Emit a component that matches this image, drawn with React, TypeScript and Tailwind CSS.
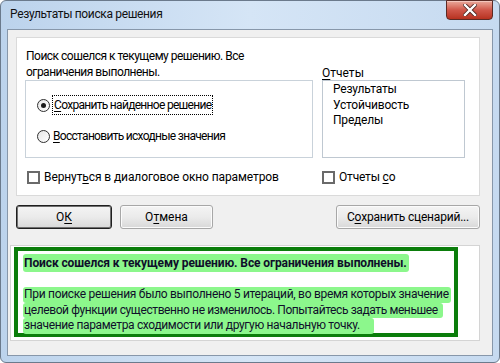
import React from "react";

// Win7 "Solver results" dialog, Russian locale

function Mnemonic({ text, at }: { text: string; at: number }) {
  return (
    <>
      {text.slice(0, at)}
      <span className="underline decoration-1 underline-offset-[2px]">{text[at]}</span>
      {text.slice(at + 1)}
    </>
  );
}

function Radio({ checked }: { checked?: boolean }) {
  return (
    <span className="flex h-[13px] w-[13px] shrink-0 items-center justify-center rounded-full border border-[#2f2f2f] bg-gradient-to-br from-[#e6e6e6] to-white">
      {checked && <span className="h-[5px] w-[5px] rounded-full bg-[#1a1a1a]" />}
    </span>
  );
}

function Checkbox() {
  return <span className="h-[13px] w-[13px] shrink-0 border-2 border-[#6a6a6a] bg-white" />;
}

function Button({
  children,
  width,
  primary,
}: {
  children: React.ReactNode;
  width: string;
  primary?: boolean;
}) {
  return (
    <div
      className={`flex h-[24px] items-center justify-center rounded-[3px] bg-gradient-to-b from-[#f4f4f4] via-[#ebebeb] to-[#d8d8d8] ${width} ${
        primary
          ? "border border-[#1f1f1f] shadow-[inset_0_0_0_1px_#6f6f6f]"
          : "border border-[#a7a7a7] shadow-[inset_0_0_0_1px_#fbfbfb]"
      }`}
    >
      {children}
    </div>
  );
}

function CloseButton() {
  return (
    <div className="-mt-[1px] flex h-[20px] w-[47px] items-center justify-center rounded-b-[4px] border border-[#5b2a24] bg-gradient-to-b from-[#e9a99c] via-[#d0574a] to-[#b7311f] shadow-[inset_0_1px_0_#f3c6bd]">
      <svg width="14" height="12" viewBox="0 0 14 12">
        <path d="M2 1 L12 11 M12 1 L2 11" stroke="#4a2420" strokeWidth="4" strokeLinecap="square" />
        <path d="M2 1 L12 11 M12 1 L2 11" stroke="#ffffff" strokeWidth="2.4" strokeLinecap="square" />
      </svg>
    </div>
  );
}

export default function App() {
  return (
    <div className="h-[363px] w-[500px] bg-white font-['Roboto',sans-serif] text-[12px] leading-[16px] text-black">
      <div className="flex h-full w-full flex-col rounded-[6px] border border-[#6b7a8c] bg-gradient-to-r from-[#bcd3ec] via-[#d5e5f6] to-[#c6daf0] px-[6px] pb-[6px]">
        {/* title bar */}
        <div className="flex h-[28px] items-start justify-between">
          <div className="pl-[3px] pt-[5px] text-[12px] tracking-[-0.35px] text-[#111]">
            Результаты поиска решения
          </div>
          <CloseButton />
        </div>

        {/* client area */}
        <div className="flex flex-1 flex-col border border-[#8797aa] bg-[#f0f0f0]">
          <div className="ml-[8px] mt-[7px] flex h-[159px] w-[464px] flex-col border border-[#dadada] bg-white pl-[8px] pt-[10px]">
            <div className="grid grid-cols-[288px_143px] gap-x-[9px]">
              <div className="pl-[1px] tracking-[-0.5px]">
                Поиск сошелся к текущему решению. Все
                <br />
                ограничения выполнены.
              </div>
              <div className="self-end leading-[14px]">
                <Mnemonic text="Отчеты" at={0} />
              </div>

              <div className="flex h-[78px] flex-col border border-[#c9d2da] pl-[11px] pt-[14px] tracking-[-0.7px]">
                <div className="flex items-center gap-[2px]">
                  <Radio checked />
                  <span className="border border-dotted border-black px-[1px] py-[1px]">
                    <Mnemonic text="Сохранить найденное решение" at={0} />
                  </span>
                </div>
                <div className="mt-[13px] flex items-center gap-[3px]">
                  <Radio />
                  <span>
                    <Mnemonic text="Восстановить исходные значения" at={0} />
                  </span>
                </div>
              </div>

              <div className="h-[78px] border border-[#bfc8d1] pl-[10px] pt-[1px] leading-[15.5px] tracking-[-0.2px]">
                <div>Результаты</div>
                <div>Устойчивость</div>
                <div>Пределы</div>
              </div>
            </div>

            <div className="mt-[11px] grid grid-cols-[297px_143px]">
              <div className="flex items-center gap-[4px] pl-[2px] tracking-[-0.1px]">
                <Checkbox />
                <span>
                  <Mnemonic text="Вернуться в диалоговое окно параметров" at={6} />
                </span>
              </div>
              <div className="flex items-center gap-[4px] tracking-[-0.2px]">
                <Checkbox />
                <span>
                  <Mnemonic text="Отчеты со" at={7} />
                </span>
              </div>
            </div>
          </div>

          {/* buttons */}
          <div className="ml-[8px] mt-[9px] flex w-[464px] items-center">
            <Button width="w-[96px]" primary>
              <Mnemonic text="ОК" at={1} />
            </Button>
            <div className="ml-[8px]">
              <Button width="w-[93px]">
                <Mnemonic text="Отмена" at={1} />
              </Button>
            </div>
            <div className="ml-auto tracking-[-0.2px]">
              <Button width="w-[144px]">
                <Mnemonic text="Сохранить сценарий..." at={1} />
              </Button>
            </div>
          </div>

          {/* message */}
          <div className="ml-[2px] mt-[16px] h-[96px] w-[470px] border border-[#d4d4d4] bg-white pl-[3px] pt-[1px]">
            <div className="h-[90px] w-[444px] border-[4px] border-[#0b7d0b] pl-[5px] pt-[4px] text-[#0f0f2a]">
              <div className="whitespace-nowrap font-bold tracking-[-0.1px]">
                <span className="rounded-[3px] bg-[#8cf78c] py-[2px] pl-[1px] pr-[2px]">
                  Поиск сошелся к текущему решению. Все ограничения выполнены.
                </span>
              </div>
              <div className="mt-[16px] flex flex-col items-start whitespace-nowrap leading-[15.5px]">
                <span className="rounded-[3px] bg-[#8cf78c] pl-[1px] pr-[2px] tracking-[-0.3px]">
                  При поиске решения было выполнено 5 итераций, во время которых значение
                </span>
                <span className="rounded-[3px] bg-[#8cf78c] pl-[1px] pr-[5px] tracking-[-0.4px]">
                  целевой функции существенно не изменилось. Попытайтесь задать меньшее
                </span>
                <span className="rounded-[3px] bg-[#8cf78c] pl-[1px] pr-[14px] tracking-[-0.35px]">
                  значение параметра сходимости или другую начальную точку.
                </span>
              </div>
            </div>
          </div>
        </div>
      </div>
    </div>
  );
}
